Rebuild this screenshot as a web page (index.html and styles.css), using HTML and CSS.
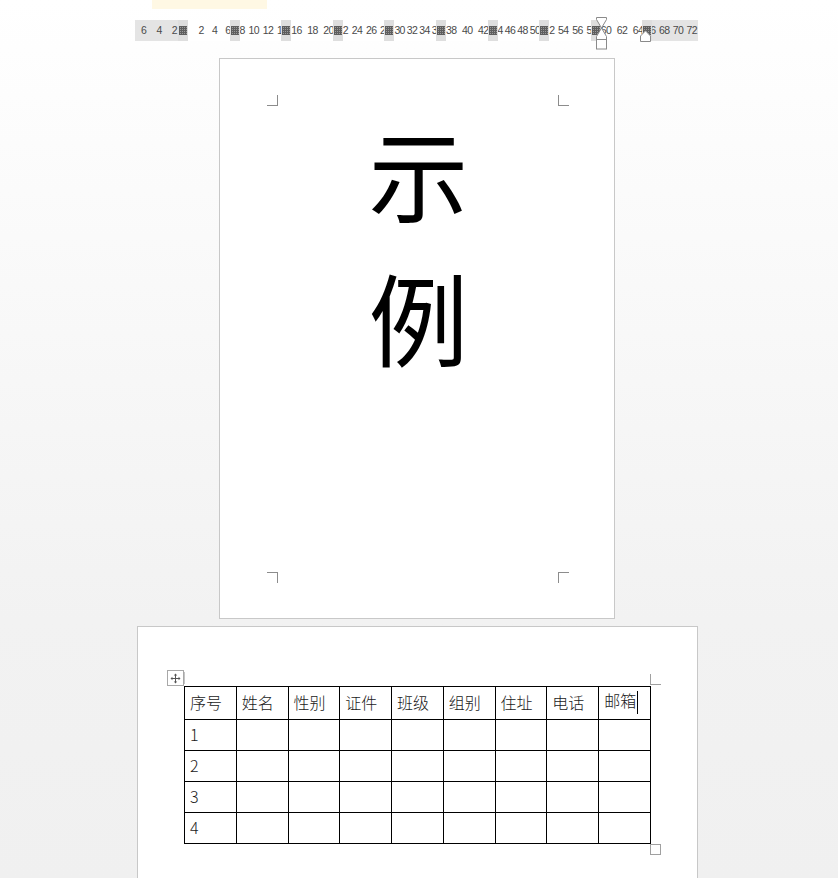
FILE: index.html
```html
<!DOCTYPE html>
<html lang="zh-CN">
<head>
<meta charset="utf-8">
<title>示例</title>
<link rel="stylesheet" href="styles.css">
</head>
<body>
<div class="app">
  <div class="topstrip"><div class="hint"></div></div>

  <div class="ruler">
    <span class="seg first"><i>6</i><i>4</i><i>2</i></span>
    <span class="mark"><b></b></span>
    <span class="seg white"><i>&nbsp;</i><i>2</i><i>4</i><i>6</i></span>
    <span class="mark"><b></b></span>
    <span class="seg white"><i>8</i><i>10</i><i>12</i><i>1</i></span>
    <span class="mark"><b></b></span>
    <span class="seg white"><i>16</i><i>18</i><i>20</i></span>
    <span class="mark"><b></b></span>
    <span class="seg white"><i>2</i><i>24</i><i>26</i><i>2</i></span>
    <span class="mark"><b></b></span>
    <span class="seg white"><i>30</i><i>32</i><i>34</i><i>3</i></span>
    <span class="mark"><b></b></span>
    <span class="seg white"><i>38</i><i>40</i><i>42</i></span>
    <span class="mark"><b></b></span>
    <span class="seg white"><i>4</i><i>46</i><i>48</i><i>50</i></span>
    <span class="mark"><b></b></span>
    <span class="seg white"><i>2</i><i>54</i><i>56</i><i>5</i></span>
    <span class="mark"><b></b></span>
    <span class="seg white"><i>60</i><i>62</i><i>64</i></span>
    <span class="mark"><b></b></span>
    <span class="seg last"><i>6</i><i>68</i><i>70</i><i>72</i></span>

    <svg class="marker-hour" width="11" height="33" viewBox="0 0 11 33">
      <path d="M0.5 0.5 H10.5 V2.5 L5.5 11 L10.5 19.5 V22.5 H0.5 V19.5 L5.5 11 L0.5 2.5 Z" fill="#fff" stroke="#8a8a8a"/>
      <rect x="0.5" y="22.5" width="10" height="9.5" fill="#fff" stroke="#8a8a8a"/>
    </svg>
    <svg class="marker-right" width="11" height="12" viewBox="0 0 11 12">
      <path d="M0.5 11.5 V6 L5.5 0.8 L10.5 6 V11.5 Z" fill="#fff" stroke="#8a8a8a"/>
    </svg>
  </div>

  <div class="page page1">
    <div class="marks">
      <span class="cm cm-tl"></span>
      <span class="cm cm-tr"></span>
    </div>
    <div class="title">示<br>例</div>
    <div class="marks marks-bottom">
      <span class="cm cm-bl"></span>
      <span class="cm cm-br"></span>
    </div>
  </div>

  <div class="page page2">
    <div class="table-top">
      <span class="move-handle">
        <svg width="11" height="11" viewBox="0 0 11 11">
          <path d="M5.5 1 V10 M1 5.5 H10" stroke="#555" stroke-width="1"/>
          <path d="M5.5 0.5 L3.8 2.4 H7.2 Z M5.5 10.5 L3.8 8.6 H7.2 Z M0.5 5.5 L2.4 3.8 V7.2 Z M10.5 5.5 L8.6 3.8 V7.2 Z" fill="#555"/>
        </svg>
      </span>
      <span class="handle-tick"></span>
      <span class="cm cm-table"></span>
    </div>
    <table class="grid">
      <tr class="head">
        <td>序号</td><td>姓名</td><td>性别</td><td>证件</td><td>班级</td><td>组别</td><td>住址</td><td>电话</td><td>邮箱<span class="caret"></span></td>
      </tr>
      <tr><td>1</td><td></td><td></td><td></td><td></td><td></td><td></td><td></td><td></td></tr>
      <tr><td>2</td><td></td><td></td><td></td><td></td><td></td><td></td><td></td><td></td></tr>
      <tr><td>3</td><td></td><td></td><td></td><td></td><td></td><td></td><td></td><td></td></tr>
      <tr><td>4</td><td></td><td></td><td></td><td></td><td></td><td></td><td></td><td></td></tr>
    </table>
    <div class="resize-row"><span class="resize-handle"></span></div>
  </div>
</div>
</body>
</html>
```

FILE: styles.css
```css
* { box-sizing: border-box; }

html, body {
  margin: 0;
  padding: 0;
  height: 100%;
  overflow: hidden;
}

body {
  background: linear-gradient(to bottom, #ffffff 0px, #f7f7f7 380px, #f2f2f2 620px, #f0f0f0 100%);
  font-family: "Noto Sans CJK SC", "Noto Sans", sans-serif;
}

.app {
  display: flex;
  flex-direction: column;
  align-items: flex-start;
}

.topstrip {
  height: 9px;
  width: 100%;
  padding-left: 152px;
}

.hint {
  width: 115px;
  height: 9px;
  background: #fff8e4;
}

/* ruler */
.ruler {
  position: relative;
  margin-top: 11px;
  margin-left: 135px;
  width: 563px;
  height: 21px;
  display: flex;
  background: #e4e4e4;
  font-family: "Liberation Sans", Arial, sans-serif;
  font-size: 10.5px;
  letter-spacing: -0.6px;
  color: #4a4a4a;
  line-height: 21px;
}

.seg {
  display: flex;
  justify-content: space-between;
  flex: none;
  width: 45.6px;
  margin: 0 -2px;
  padding: 0 1px 0 2px;
  overflow: hidden;
  white-space: nowrap;
}

.seg i { font-style: normal; }

.seg.white { background: #ffffff; }

.seg.first {
  width: 45px;
  margin-left: 0;
  padding: 0 3px 0 6px;
}

.seg.last {
  width: 47.6px;
  margin-right: 0;
  padding: 0 1px 0 0;
}

.mark {
  position: relative;
  z-index: 1;
  flex: none;
  display: flex;
  align-items: center;
  justify-content: center;
  width: 10px;
  background: #dedede;
}

.mark b {
  display: block;
  width: 8px;
  height: 9px;
  background-color: #9a9a9a;
  background-image:
    repeating-linear-gradient(90deg, #5e5e5e 0 1px, transparent 1px 2px),
    repeating-linear-gradient(0deg, #5e5e5e 0 1px, transparent 1px 2px);
}

.marker-hour {
  position: absolute;
  z-index: 2;
  left: 461px;
  top: -3px;
}

.marker-right {
  position: absolute;
  z-index: 2;
  left: 505px;
  top: 10px;
}

/* pages */
.page {
  background: #ffffff;
  border: 1px solid #c8c8c8;
}

.page1 {
  margin-top: 17px;
  margin-left: 219px;
  width: 396px;
  height: 561px;
  padding: 36px 45px 35px 47px;
  display: flex;
  flex-direction: column;
}

.marks {
  display: flex;
  justify-content: space-between;
  height: 11px;
}

.marks-bottom { margin-top: auto; }

.cm {
  display: block;
  width: 11px;
  height: 11px;
  border: 0 solid #8c8c8c;
}

.cm-tl { border-right-width: 1px; border-bottom-width: 1px; }
.cm-tr { border-left-width: 1px; border-bottom-width: 1px; }
.cm-bl { border-right-width: 1px; border-top-width: 1px; }
.cm-br { border-left-width: 1px; border-top-width: 1px; }

.title {
  margin-top: -6px;
  text-align: center;
  font-family: "Noto Sans CJK SC", sans-serif;
  font-size: 100px;
  line-height: 144px;
  color: #000;
  padding-left: 1px;
}

.page2 {
  margin-top: 7px;
  margin-left: 137px;
  width: 561px;
  height: 300px;
  padding-top: 43px;
}

.table-top {
  display: flex;
  align-items: flex-start;
  height: 16px;
  padding-left: 29px;
}

.move-handle {
  display: flex;
  align-items: center;
  justify-content: center;
  width: 17px;
  height: 16px;
  border: 1px solid #a8a8a8;
  background: #fff;
}

.handle-tick {
  width: 1px;
  height: 12px;
  margin-top: 2px;
  background: #c4c4c4;
}

.cm-table {
  margin-left: 465px;
  margin-top: 4px;
  border-left-width: 1px;
  border-bottom-width: 1px;
  border-color: #a0a0a0;
}

.grid {
  margin-left: 46px;
  border-collapse: collapse;
  table-layout: fixed;
  width: 467px;
  font-family: "Noto Sans CJK SC", sans-serif;
  font-weight: 300;
  font-size: 16px;
  color: #1a1a1a;
}

.grid td {
  border: 1px solid #000;
  padding: 0 0 2px 5px;
  height: 31px;
  line-height: 20px;
  vertical-align: middle;
  white-space: nowrap;
}

.grid tr.head td { height: 33px; }

.caret {
  display: inline-block;
  width: 1px;
  height: 23px;
  background: #000;
  vertical-align: middle;
  margin-left: 1px;
}

.resize-row {
  padding-left: 512px;
}

.resize-handle {
  display: block;
  width: 11px;
  height: 11px;
  border: 1px solid #a0a0a0;
  background: #fff;
}
```
